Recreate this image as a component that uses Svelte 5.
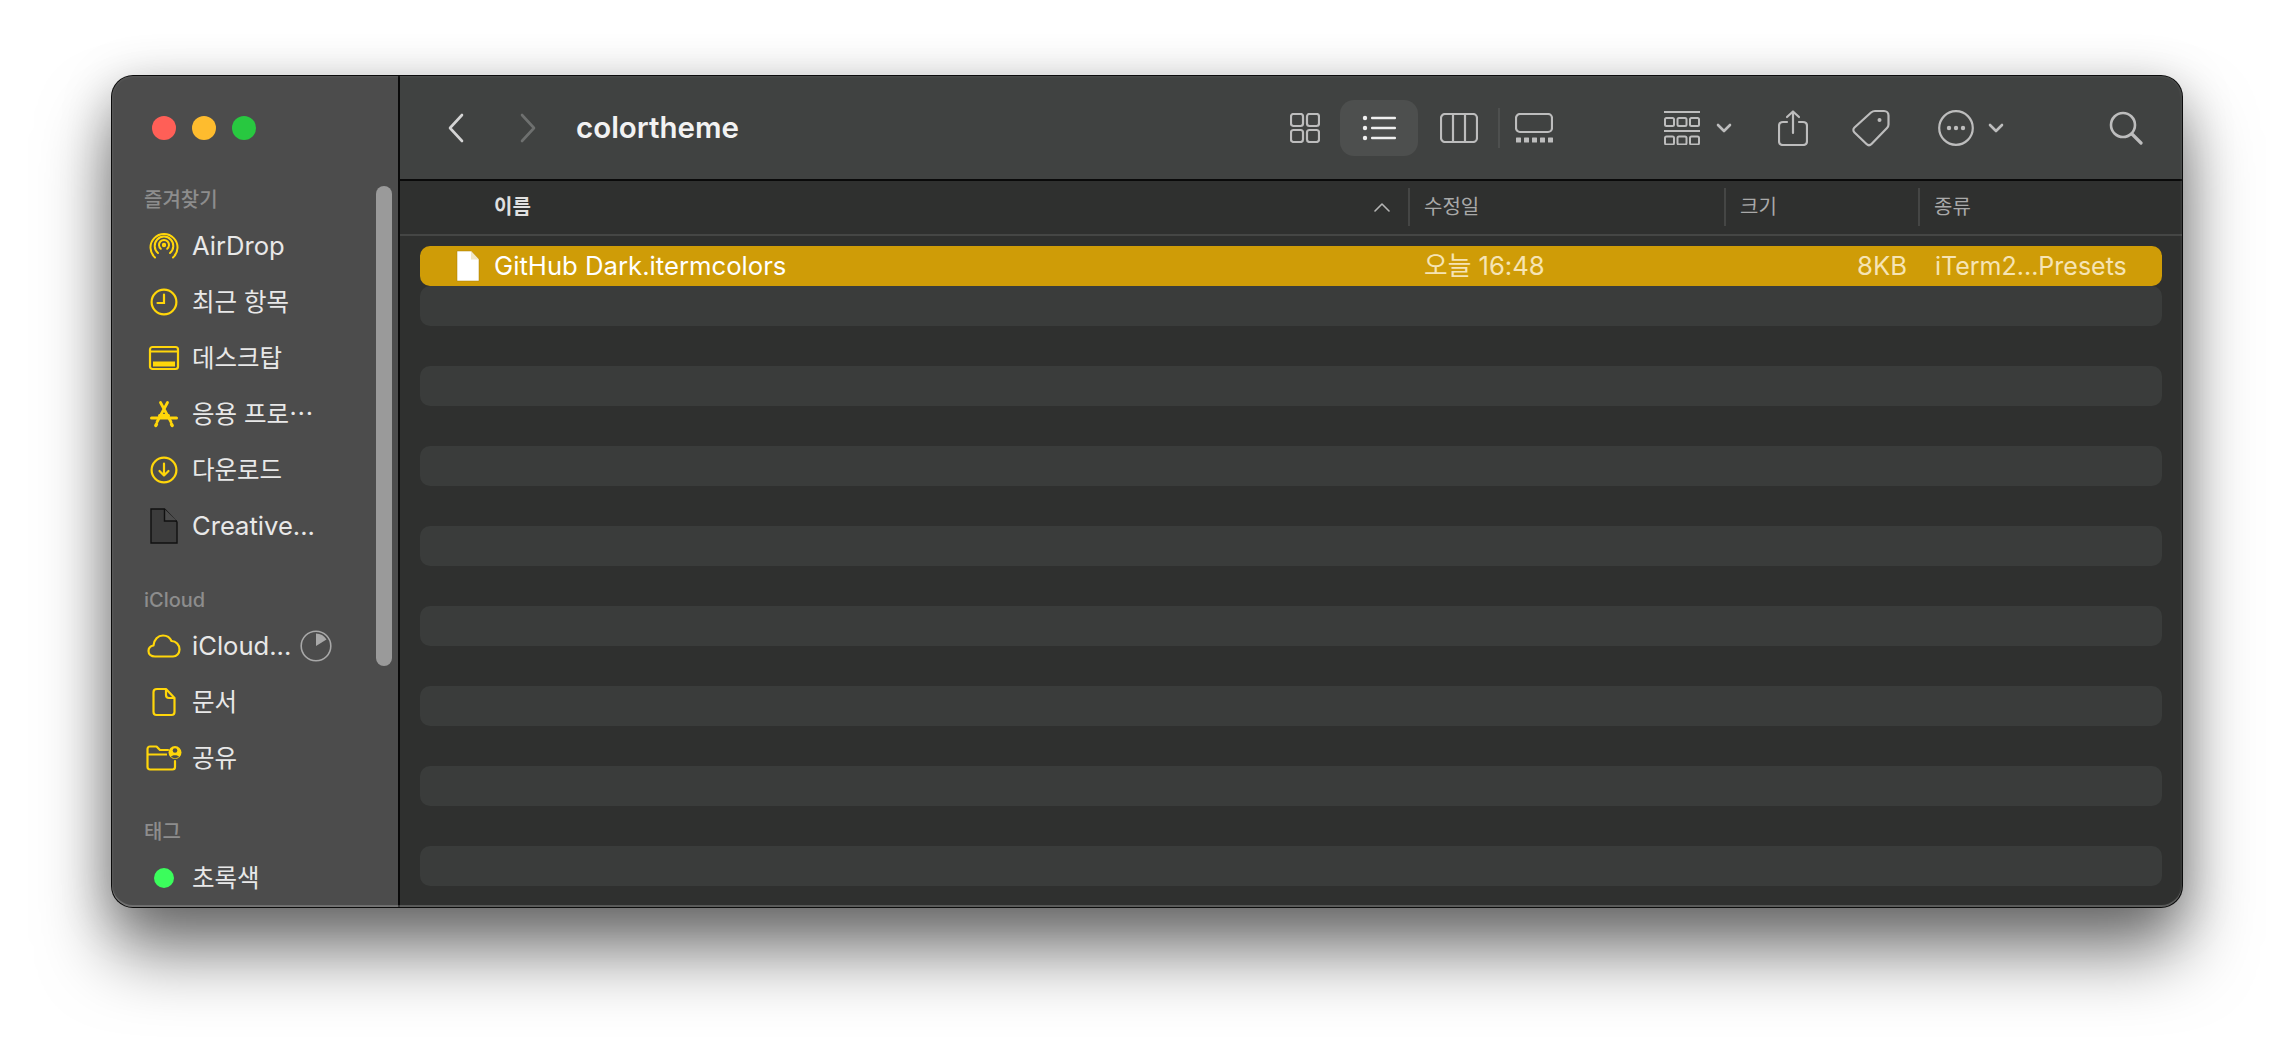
<script>
	const favourites = [
		{ icon: 'airdrop', label: 'AirDrop' },
		{ icon: 'clock', label: '최근 항목', ko: true },
		{ icon: 'desktop', label: '데스크탑', ko: true },
		{ icon: 'apps', label: '응용 프로⋯', ko: true },
		{ icon: 'download', label: '다운로드', ko: true },
		{ icon: 'creative', label: 'Creative...' }
	];
	const cloud = [
		{ icon: 'cloud', label: 'iCloud...', pie: true },
		{ icon: 'doc', label: '문서', ko: true },
		{ icon: 'shared', label: '공유', ko: true }
	];
	const stripes = [1, 2, 3, 4, 5, 6, 7, 8];
</script>

{#snippet sideIcon(name)}
	{#if name === 'airdrop'}
		<svg width="32" height="32" viewBox="0 0 32 32" fill="none" stroke="#ffd60a" stroke-width="2" stroke-linecap="round">
			<path d="M7 27.5A13.5 13.5 0 1 1 25 27.5" />
			<path d="M10 23A9.300 9.300 0 1 1 22 23" />
			<path d="M12.800 18.800A5 5 0 1 1 19.200 18.800" />
			<circle cx="16" cy="15" r="1.200" />
		</svg>
	{:else if name === 'clock'}
		<svg width="30" height="30" viewBox="0 0 30 30" fill="none" stroke="#ffd60a" stroke-width="2.200" stroke-linecap="round">
			<circle cx="15" cy="15" r="12.400" />
			<path d="M15 7.500V16H8.500" />
		</svg>
	{:else if name === 'desktop'}
		<svg width="32" height="26" viewBox="0 0 32 26" fill="none">
			<rect x="2" y="2" width="28" height="22" rx="2.500" stroke="#ffd60a" stroke-width="2.200" />
			<path d="M2 6.500H30" stroke="#ffd60a" stroke-width="2" />
			<rect x="5" y="16.500" width="22" height="5" fill="#ffd60a" />
		</svg>
	{:else if name === 'apps'}
		<svg width="30" height="28" viewBox="0 0 30 28" fill="none" stroke="#ffd60a" stroke-linecap="round">
			<path d="M11.500 2.500L22 22M18.500 2.500L8 22" stroke-width="2.800" />
			<path d="M2.500 18H27.500" stroke-width="3" />
			<path d="M10.500 15.500H19.500" stroke-width="3" />
			<path d="M6.800 25.500L7.500 24.200M23.200 25.500L22.500 24.200" stroke-width="3.400" />
		</svg>
	{:else if name === 'download'}
		<svg width="30" height="30" viewBox="0 0 30 30" fill="none" stroke="#ffd60a" stroke-width="2.200" stroke-linecap="round" stroke-linejoin="round">
			<circle cx="15" cy="15" r="12.400" />
			<path d="M15 8.500V20.500M10.500 16L15 20.500L19.500 16" />
		</svg>
	{:else if name === 'creative'}
		<svg width="30" height="38" viewBox="0 0 30 38" fill="#3c3c3c" stroke="#111" stroke-width="1.400">
			<path d="M2 2H15.500L28 15V36H2Z" />
			<path d="M15.500 2V14H28" fill="#4c4c4c" />
		</svg>
	{:else if name === 'cloud'}
		<svg width="34" height="24" viewBox="0 0 34 24" fill="none" stroke="#ffd60a" stroke-width="2.200" stroke-linejoin="round">
			<path d="M8 22.500C4 22.500 1.500 20 1.500 17C1.500 14 3.500 12 6.500 11.500C7 5.500 11 1.500 16 1.500C20 1.500 23 3.500 24.500 7C29 7 32.500 11 32.500 15.500C32.500 19.500 29.500 22.500 26 22.500Z" />
		</svg>
	{:else if name === 'doc'}
		<svg width="24" height="30" viewBox="0 0 24 30" fill="none" stroke="#ffd60a" stroke-width="2.200" stroke-linejoin="round">
			<path d="M5 2H14L22.500 11V25C22.500 27 21 28 19.500 28H4.500C3 28 1.500 27 1.500 25V5C1.500 3 3 2 5 2Z" />
			<path d="M14 2V8C14 10 15 11 17 11H22.500" />
		</svg>
	{:else if name === 'shared'}
		<svg width="36" height="26" viewBox="0 0 36 26" fill="none">
			<path d="M29 16V22C29 23.500 28 24.500 26.500 24.500H4C2.500 24.500 1.500 23.500 1.500 22V4C1.500 2.500 2.500 1.500 4 1.500H10.500L14 5H22" stroke="#ffd60a" stroke-width="2.200" stroke-linecap="round" stroke-linejoin="round" />
			<path d="M1.500 9.500H21" stroke="#ffd60a" stroke-width="2" />
			<circle cx="29" cy="7.500" r="6.500" fill="#ffd60a" />
			<circle cx="29" cy="5.500" r="2.300" fill="#4c4c4c" />
			<path d="M25 12C25.500 9.500 32.500 9.500 33 12L29 13.500Z" fill="#4c4c4c" />
		</svg>
	{/if}
{/snippet}

<div class="page">
	<div class="window">
		<aside class="sidebar">
			<div class="lights">
				<span class="light red"></span>
				<span class="light yellow"></span>
				<span class="light green"></span>
			</div>

			<div class="heading">즐겨찾기</div>
			{#each favourites as item}
				<div class="item">
					<span class="slot">{@render sideIcon(item.icon)}</span>
					<span class:ko={item.ko}>{item.label}</span>
				</div>
			{/each}

			<div class="heading spaced">iCloud</div>
			{#each cloud as item}
				<div class="item">
					<span class="slot">{@render sideIcon(item.icon)}</span>
					<span class:ko={item.ko}>{item.label}</span>
					{#if item.pie}
						<svg class="pie" width="32" height="32" viewBox="0 0 32 32" fill="none">
							<circle cx="16" cy="16" r="14.800" stroke="#a8a8a8" stroke-width="1.600" />
							<path d="M16 16V3.500A12.500 12.500 0 0 1 26.500 9.500Z" fill="#a8a8a8" />
						</svg>
					{/if}
				</div>
			{/each}

			<div class="heading spaced">태그</div>
			<div class="item">
				<span class="slot"><span class="tag"></span></span>
				<span class="ko">초록색</span>
			</div>

			<div class="scrollbar"></div>
		</aside>

		<main class="main">
			<header class="toolbar">
				<svg class="back" width="18" height="30" viewBox="0 0 18 30" fill="none" stroke="#d4d4d4" stroke-width="2.600" stroke-linecap="round" stroke-linejoin="round">
					<path d="M15 2L3 15L15 28" />
				</svg>
				<svg class="forward" width="18" height="30" viewBox="0 0 18 30" fill="none" stroke="#6e706f" stroke-width="2.600" stroke-linecap="round" stroke-linejoin="round">
					<path d="M3 2L15 15L3 28" />
				</svg>
				<h1>colortheme</h1>

				<svg class="t-grid" width="30" height="30" viewBox="0 0 30 30" fill="none" stroke="#bdbdbd" stroke-width="2.200">
					<rect x="1" y="1" width="12" height="12" rx="2.500" />
					<rect x="17" y="1" width="12" height="12" rx="2.500" />
					<rect x="1" y="17" width="12" height="12" rx="2.500" />
					<rect x="17" y="17" width="12" height="12" rx="2.500" />
				</svg>
				<div class="active">
					<svg width="36" height="26" viewBox="0 0 36 26" fill="#f0f0f0">
						<circle cx="4" cy="3" r="2.200" />
						<circle cx="4" cy="13" r="2.200" />
						<circle cx="4" cy="23" r="2.200" />
						<rect x="10" y="1.800" width="25" height="2.400" rx="1" />
						<rect x="10" y="11.800" width="25" height="2.400" rx="1" />
						<rect x="10" y="21.800" width="25" height="2.400" rx="1" />
					</svg>
				</div>
				<svg class="t-cols" width="38" height="30" viewBox="0 0 38 30" fill="none" stroke="#bdbdbd" stroke-width="2.200">
					<rect x="1" y="1" width="36" height="28" rx="4" />
					<path d="M13 1V29M25 1V29" />
				</svg>
				<span class="divider"></span>
				<svg class="t-gallery" width="38" height="30" viewBox="0 0 38 30" fill="none">
					<rect x="1" y="1" width="36" height="18" rx="4" stroke="#bdbdbd" stroke-width="2.200" />
					<g fill="#bdbdbd">
						<rect x="1" y="24.500" width="5" height="5" rx="0.500" />
						<rect x="9" y="24.500" width="5" height="5" rx="0.500" />
						<rect x="17" y="24.500" width="5" height="5" rx="0.500" />
						<rect x="25" y="24.500" width="5" height="5" rx="0.500" />
						<rect x="33" y="24.500" width="5" height="5" rx="0.500" />
					</g>
				</svg>

				<svg class="t-group" width="36" height="34" viewBox="0 0 36 34" fill="none" stroke="#bdbdbd" stroke-width="2">
					<path d="M0 1H36M0 20H36" />
					<rect x="1" y="7" width="9" height="8" rx="1.500" />
					<rect x="13.500" y="7" width="9" height="8" rx="1.500" />
					<rect x="26" y="7" width="9" height="8" rx="1.500" />
					<rect x="1" y="25.500" width="9" height="8" rx="1.500" />
					<rect x="13.500" y="25.500" width="9" height="8" rx="1.500" />
					<rect x="26" y="25.500" width="9" height="8" rx="1.500" />
				</svg>
				<svg class="t-chev" width="16" height="10" viewBox="0 0 16 10" fill="none" stroke="#bdbdbd" stroke-width="2.600" stroke-linecap="round" stroke-linejoin="round">
					<path d="M2 2L8 8L14 2" />
				</svg>
				<svg class="t-share" width="30" height="36" viewBox="0 0 30 36" fill="none" stroke="#bdbdbd" stroke-width="2.200" stroke-linecap="round" stroke-linejoin="round">
					<path d="M9 12H5C2.500 12 1 13.500 1 16V31C1 33.500 2.500 35 5 35H25C27.500 35 29 33.500 29 31V16C29 13.500 27.500 12 25 12H21" />
					<path d="M15 23V1.500M9 7L15 1.500L21 7" />
				</svg>
				<svg class="t-tag" width="38" height="38" viewBox="0 0 38 38" fill="none" stroke="#bdbdbd" stroke-width="2.200" stroke-linejoin="round">
					<path d="M23 2H32C34.500 2 36.500 4 36.500 6.500V15.500C36.500 17 36 18 35 19L19.500 35C18 36.500 16 36.500 14.500 35L2.500 23.500C1 22 1 20 2.500 18.500L19 3.500C20.500 2.300 21.500 2 23 2Z" />
					<circle cx="27.500" cy="11" r="2" fill="#bdbdbd" stroke="none" />
				</svg>
				<svg class="t-more" width="36" height="36" viewBox="0 0 36 36" fill="none">
					<circle cx="18" cy="18" r="16.800" stroke="#bdbdbd" stroke-width="2.200" />
					<g fill="#bdbdbd">
						<circle cx="11" cy="18" r="2.200" />
						<circle cx="18" cy="18" r="2.200" />
						<circle cx="25" cy="18" r="2.200" />
					</g>
				</svg>
				<svg class="t-chev2" width="16" height="10" viewBox="0 0 16 10" fill="none" stroke="#bdbdbd" stroke-width="2.600" stroke-linecap="round" stroke-linejoin="round">
					<path d="M2 2L8 8L14 2" />
				</svg>
				<svg class="t-search" width="34" height="34" viewBox="0 0 34 34" fill="none" stroke="#bdbdbd" stroke-width="2.600" stroke-linecap="round">
					<circle cx="14" cy="14" r="12" />
					<path d="M23 23L32 32" stroke-width="3.200" />
				</svg>
			</header>

			<div class="columns">
				<div class="col name">
					<span>이름</span>
					<svg width="18" height="10" viewBox="0 0 18 10" fill="none" stroke="#b5b5b5" stroke-width="1.600" stroke-linecap="round" stroke-linejoin="round">
						<path d="M2 9L9 2L16 9" />
					</svg>
				</div>
				<div class="col sep">수정일</div>
				<div class="col sep">크기</div>
				<div class="col sep">종류</div>
			</div>

			<div class="rows">
				<div class="row selected">
					<div class="cell-name">
						<svg width="24" height="32" viewBox="0 0 24 32">
							<path d="M1 1H15L23 9.500V31H1Z" fill="#fff" stroke="#a67c05" stroke-width="0.500" />
							<path d="M15 1V9.500H23Z" fill="#f1e6c6" />
						</svg>
						<span>GitHub Dark.itermcolors</span>
					</div>
					<div class="cell">오늘 16:48</div>
					<div class="cell size">8KB</div>
					<div class="cell kind">iTerm2...Presets</div>
				</div>
				{#each stripes as n}
					<div class="row stripe" data-row={n}></div>
				{/each}
			</div>
		</main>
	</div>
</div>

<style>
	:global(body) {
		background: #fff;
		overflow: hidden;
	}
	.page {
		height: 1056px;
		padding: 76px 0 0 112px;
		box-sizing: border-box;
		font-family: Inter, 'Noto Sans CJK KR', sans-serif;
	}
	.window {
		width: 2070px;
		height: 831px;
		display: flex;
		border-radius: 21px;
		overflow: hidden;
		background: #2f302f;
		box-shadow:
			0 0 0 1px #0c0c0c,
			0 46px 70px rgba(0, 0, 0, 0.5),
			0 10px 50px rgba(0, 0, 0, 0.25);
		position: relative;
	}
	.window::after {
		content: '';
		position: absolute;
		inset: 0;
		border-radius: 21px;
		box-shadow:
			inset 0 -2px 0 rgba(255, 255, 255, 0.18),
			inset 0 0 3px rgba(255, 255, 255, 0.15);
		pointer-events: none;
	}

	.sidebar {
		width: 288px;
		flex: none;
		background: #4c4c4c;
		position: relative;
		color: #e8e8e8;
		box-sizing: border-box;
		padding: 0 0 0 32px;
		border-right: 2px solid #0a0a0a;
		overflow: hidden;
	}
	.lights {
		display: flex;
		gap: 16px;
		height: 109px;
		padding: 40px 0 0 8px;
		box-sizing: border-box;
	}
	.light {
		width: 24px;
		height: 24px;
		border-radius: 50%;
	}
	.red { background: #ff5f57; }
	.yellow { background: #febc2e; }
	.green { background: #28c840; }

	.heading {
		height: 30px;
		line-height: 30px;
		font-size: 20px;
		font-weight: 500;
		color: #8d8d8d;
		margin-bottom: 3px;
	}
	.spaced {
		margin-top: 31px;
	}
	.item {
		height: 56px;
		display: flex;
		align-items: center;
		font-size: 25.600px;
		line-height: 30px;
		white-space: nowrap;
	}
	.ko {
		font-size: 24.500px;
	}
	.slot {
		width: 40px;
		margin-right: 8px;
		display: flex;
		justify-content: center;
		align-items: center;
		flex: none;
	}
	.pie {
		margin-left: 9px;
	}
	.tag {
		width: 20px;
		height: 20px;
		border-radius: 50%;
		background: #3bfd5c;
	}
	.scrollbar {
		position: absolute;
		left: 264px;
		top: 110px;
		width: 16px;
		height: 480px;
		border-radius: 8px;
		background: #9a9a9a;
	}

	.main {
		flex: 1;
		display: flex;
		flex-direction: column;
		min-width: 0;
	}
	.toolbar {
		height: 103px;
		flex: none;
		background: #404241;
		border-bottom: 2px solid #0a0a0a;
		display: flex;
		align-items: center;
		box-sizing: content-box;
	}
	.toolbar svg {
		flex: none;
	}
	.back { margin-left: 47px; }
	.forward { margin-left: 54px; }
	h1 {
		margin: 0 0 2px 39px;
		width: 162px;
		font-size: 29.500px;
		font-weight: 600;
		color: #f2f2f2;
		white-space: nowrap;
	}
	.t-grid { margin-left: 552px; }
	.active {
		width: 78px;
		height: 56px;
		margin-left: 20px;
		border-radius: 14px;
		background: #4d4f4e;
		display: flex;
		align-items: center;
		justify-content: center;
		flex: none;
	}
	.t-cols { margin-left: 22px; }
	.divider {
		width: 2px;
		height: 40px;
		background: #4e504f;
		margin-left: 20px;
		flex: none;
	}
	.t-gallery { margin-left: 15px; }
	.t-group { margin-left: 111px; }
	.t-chev { margin-left: 16px; }
	.t-share { margin-left: 46px; }
	.t-tag { margin-left: 44px; }
	.t-more { margin-left: 48px; }
	.t-chev2 { margin-left: 14px; }
	.t-search { margin-left: 105px; }

	.columns {
		flex: none;
		padding: 7px 0 0 20px;
		height: 46px;
		display: grid;
		grid-template-columns: 988px 316px 194px 1fr;
		border-bottom: 2px solid #454645;
		font-size: 20px;
		line-height: 28px;
		color: #a9a9a9;
	}
	.col {
		display: flex;
		align-items: center;
		height: 38px;
		justify-content: space-between;
	}
	.col.name {
		font-weight: 700;
		color: #e0e0e0;
		padding: 0 17px 0 74px;
	}
	.col.sep {
		justify-content: flex-start;
		border-left: 2px solid #454645;
		padding-left: 14px;
	}

	.rows {
		padding: 10px 20px 0 20px;
		display: flex;
		flex-direction: column;
		gap: 40px;
	}
	.row {
		height: 40px;
		border-radius: 10px;
		flex: none;
	}
	.row.stripe {
		background: #3a3c3b;
	}
	.row.selected {
		background: #cf9c07;
		margin-bottom: -40px;
		display: grid;
		grid-template-columns: 1004px 316px 167px 1fr;
		align-items: center;
		font-size: 25.700px;
		line-height: 30px;
		color: #f6e4b4;
		white-space: nowrap;
		position: relative;
		z-index: 1;
	}
	.cell-name {
		display: flex;
		align-items: center;
		padding-left: 36px;
		gap: 14px;
		color: #fff;
	}
	.cell.size {
		text-align: right;
	}
	.cell.kind {
		padding-left: 28px;
		font-size: 25px;
	}
</style>
